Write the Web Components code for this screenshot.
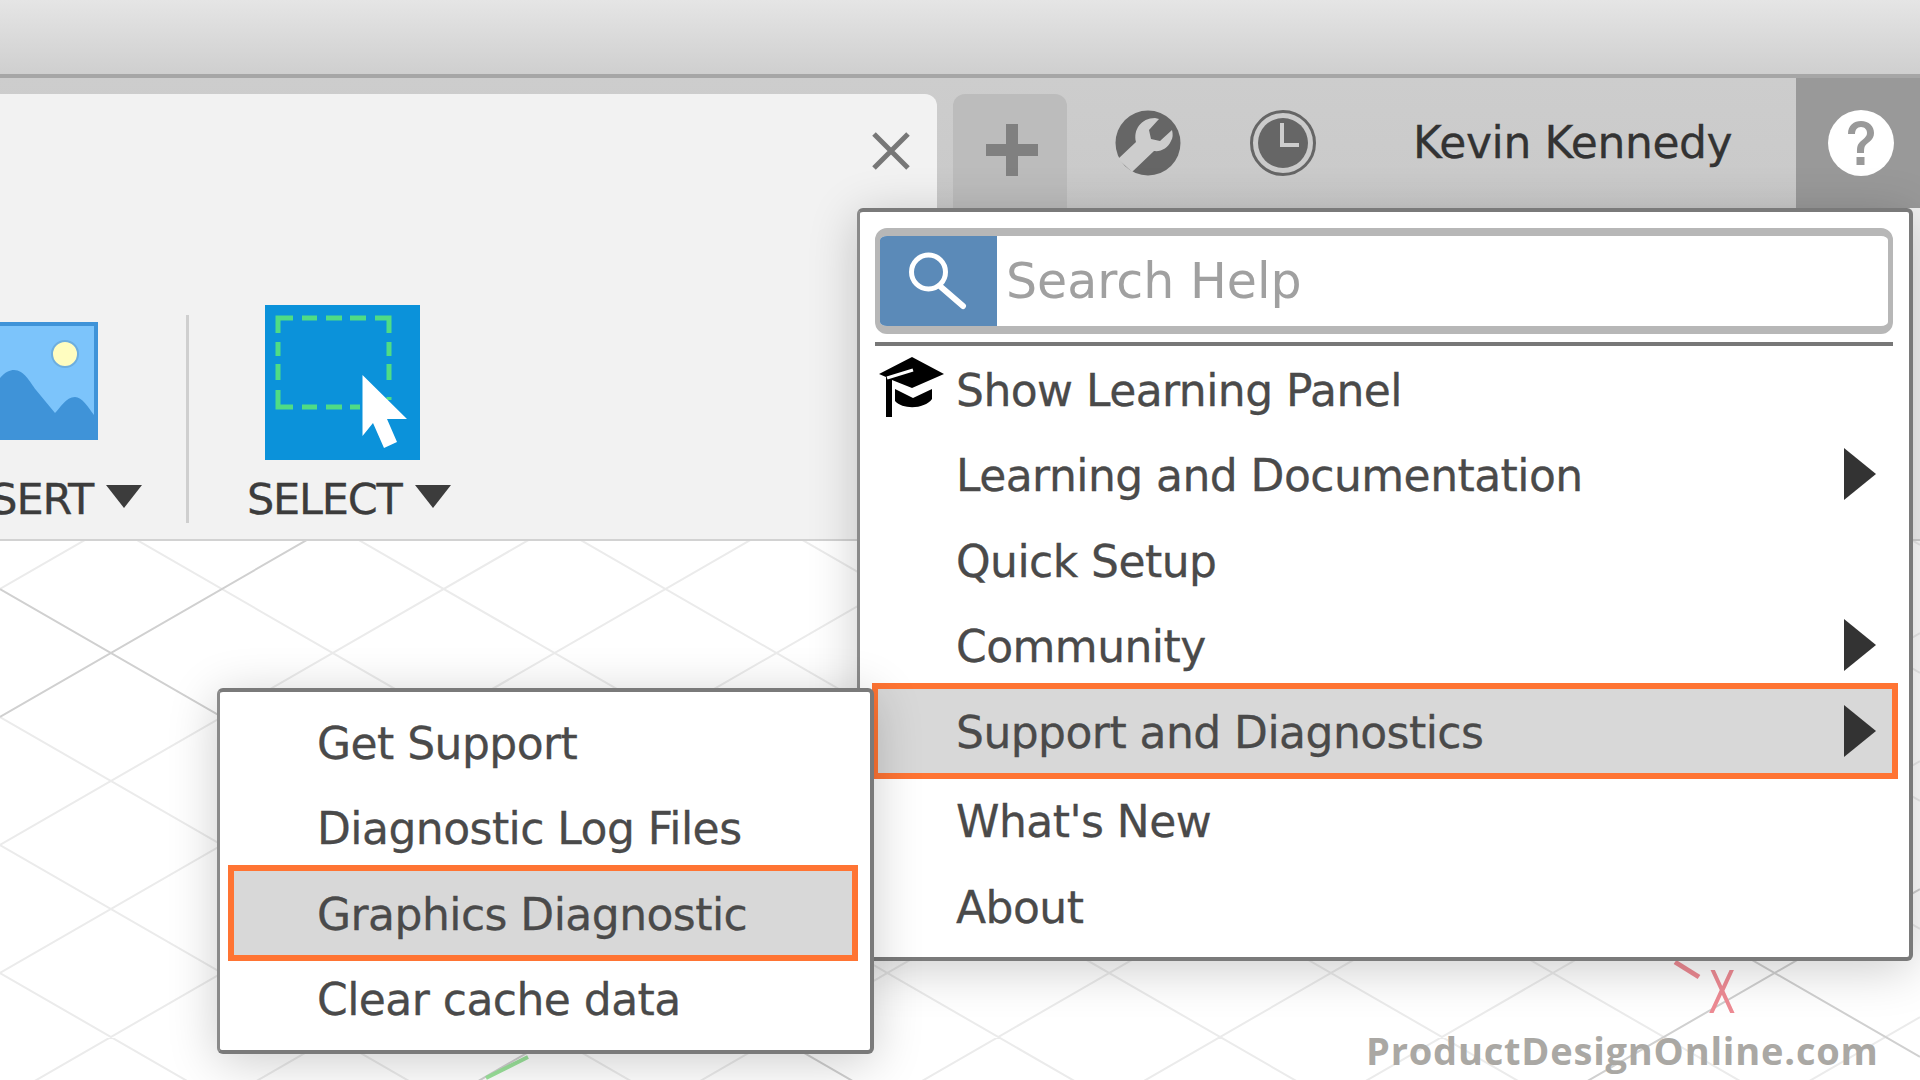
<!DOCTYPE html>
<html>
<head>
<meta charset="utf-8">
<title>Fusion help menu</title>
<style>
  html, body { margin: 0; height: 100%; overflow: hidden; }
  body { width: 1920px; height: 1080px; font-family: "DejaVu Sans", sans-serif; position: relative; background: #fff; }
</style>
</head>
<body>
<app-shell>
  <title-strip></title-strip>
  <tab-strip name="Kevin Kennedy"></tab-strip>
  <tool-bar></tool-bar>
  <grid-canvas></grid-canvas>
</app-shell>

<pop-menu style="left:857px;top:208px;width:1056px;height:753px;--frame-left:12px;">
  <search-box placeholder="Search Help"></search-box>
  <div style="height:4px;background:#777;margin:8px 16px 0 15px;"></div>
  <menu-row hat>Show Learning Panel</menu-row>
  <menu-row arrow>Learning and Documentation</menu-row>
  <menu-row>Quick Setup</menu-row>
  <menu-row arrow>Community</menu-row>
  <menu-row arrow marked>Support and Diagnostics</menu-row>
  <div style="height:4px"></div>
  <menu-row>What's New</menu-row>
  <menu-row>About</menu-row>
</pop-menu>

<pop-menu style="left:217px;top:688px;width:657px;height:366px;padding-top:7px;--frame-left:8px;--frame-right:12px;">
  <menu-row indent="97">Get Support</menu-row>
  <menu-row indent="97">Diagnostic Log Files</menu-row>
  <menu-row indent="97" marked>Graphics Diagnostic</menu-row>
  <menu-row indent="97">Clear cache data</menu-row>
</pop-menu>

<water-mark>ProductDesignOnline.com</water-mark>

<script>
class AppShell extends HTMLElement {
  constructor() {
    super();
    this.attachShadow({ mode: 'open' });
    this.shadowRoot.innerHTML = `
      <style>
        :host { display: flex; flex-direction: column; width: 1920px; height: 1080px; }
      </style>
      <slot></slot>
    `;
  }
}

class TitleStrip extends HTMLElement {
  constructor() {
    super();
    this.attachShadow({ mode: 'open' });
    this.shadowRoot.innerHTML = `
      <style>
        :host {
          display: block;
          height: 74px;
          flex: none;
          background: linear-gradient(#e5e5e5, #cfcfcf);
          border-bottom: 4px solid #a6a6a6;
        }
      </style>
    `;
  }
}

class TabStrip extends HTMLElement {
  constructor() {
    super();
    this.attachShadow({ mode: 'open' });
    this.shadowRoot.innerHTML = `
      <style>
        :host {
          display: flex;
          height: 130px;
          flex: none;
          background: linear-gradient(#cdcdcd, #c9c9c9);
          font-family: "DejaVu Sans", sans-serif;
        }
        :host > * { flex: none; }
        .tab {
          width: 937px;
          margin-top: 16px;
          background: #f2f2f2;
          border-top-right-radius: 12px;
          display: flex;
          justify-content: flex-end;
          padding: 37px 26px 0 0;
          box-sizing: border-box;
        }
        .add {
          width: 114px;
          margin: 16px 0 0 16px;
          background: #bcbcbc;
          border-radius: 12px 12px 0 0;
          display: flex;
          justify-content: center;
          padding: 30px 0 0 4px;
          box-sizing: border-box;
        }
        .wrench { margin: 32px 0 0 48px; }
        .clock { margin: 32px 0 0 69px; }
        .name {
          margin: 0 0 0 97px;
          width: 383px;
          padding-top: 40px;
          font-size: 44px;
          line-height: 50px;
          letter-spacing: -0.4px;
          color: #333;
          white-space: nowrap;
          -webkit-text-stroke: 0.3px #333;
          box-sizing: border-box;
        }
        .help {
          width: 124px;
          background: #999;
          display: flex;
          justify-content: center;
          padding: 32px 0 0 5px;
          box-sizing: border-box;
        }
        svg { display: block; }
      </style>
      <div class="tab">
        <svg width="40" height="40" viewBox="0 0 40 40"><path d="M3 3L37 37M37 3L3 37" stroke="#777" stroke-width="5" fill="none"/></svg>
      </div>
      <div class="add">
        <svg width="52" height="52" viewBox="0 0 52 52"><path d="M20 0h12v20h20v12H32v20H20V32H0V20h20z" fill="#808080"/></svg>
      </div>
      <div class="wrench">
        <svg width="66" height="66" viewBox="0 0 66 66">
          <circle cx="33" cy="33" r="32.5" fill="#666"/>
          <path d="M3 49L21 32C18 20 26 8 40 8L44 9 34 20 36 29 45 31 57 20C58 24 58 28 56 31 53 38 46 42 39 41L17 62z" fill="#cdcdcd"/>
        </svg>
      </div>
      <div class="clock">
        <svg width="66" height="66" viewBox="0 0 66 66">
          <circle cx="33" cy="33" r="31.5" fill="none" stroke="#666" stroke-width="3"/>
          <circle cx="33" cy="33" r="25" fill="#666"/>
          <path d="M32 13V35H49" fill="none" stroke="#cdcdcd" stroke-width="4"/>
        </svg>
      </div>
      <div class="name">${this.getAttribute('name')}</div>
      <div class="help">
        <svg width="66" height="66" viewBox="0 0 66 66">
          <circle cx="33" cy="33" r="33" fill="#fff"/>
          <path d="M20 24C20 15 26 11 33 11 41 11 46 16 46 23 46 30 40 32 37 36 36 38 36 40 36 43H29C29 38 29 35 32 32 35 29 39 27 39 23 39 20 37 17 33 17 29 17 27 20 27 24z" fill="#999"/>
          <rect x="28.5" y="47" width="8" height="8" fill="#999"/>
        </svg>
      </div>
    `;
  }
}

class ToolBar extends HTMLElement {
  constructor() {
    super();
    this.attachShadow({ mode: 'open' });
    this.shadowRoot.innerHTML = `
      <style>
        :host {
          display: flex;
          align-items: flex-start;
          height: 331px;
          flex: none;
          background: #f2f2f2;
          border-bottom: 2px solid #d2d2d2;
          overflow: hidden;
          font-family: "DejaVu Sans", sans-serif;
        }
        :host > * { flex: none; }
        .insert { width: 186px; margin-top: 114px; }
        .rule { width: 3px; height: 208px; background: #cfcfcf; margin-top: 107px; }
        .select { margin: 97px 0 0 76px; }
        .label {
          display: flex;
          align-items: center;
          font-size: 43px;
          line-height: 50px;
          letter-spacing: -1.2px;
          color: #3c3c3c;
          white-space: nowrap;
          -webkit-text-stroke: 0.3px #3c3c3c;
        }
        .tri {
          width: 0; height: 0;
          border-left: 18px solid transparent;
          border-right: 18px solid transparent;
          border-top: 23px solid #3c3c3c;
          margin: -5px 0 0 13px;
          flex: none;
        }
        svg { display: block; }
        .insert .label { margin: 34px 44px 0 0; justify-content: flex-end; }
        .select .label { margin: 14px 0 0 -18px; }
      </style>
      <div class="insert">
        <svg width="98" height="118" viewBox="0 0 98 118">
          <rect width="98" height="118" fill="#3f93d8"/>
          <rect x="0" y="4" width="94" height="110" fill="#7cc4fb"/>
          <circle cx="65" cy="32" r="13" fill="#fffdc0" stroke="#6daedf" stroke-width="2"/>
          <path d="M0 56C5 50 10 48 14 48 24 48 30 60 36 68L55 91C60 86 66 75 75 75 82 75 88 85 94 93V118H0z" fill="#3f93d8"/>
        </svg>
        <div class="label">SERT<span class="tri"></span></div>
      </div>
      <div class="rule"></div>
      <div class="select">
        <svg width="155" height="155" viewBox="0 0 155 155">
          <rect width="155" height="155" fill="#0b92da"/>
          <path d="M13 28V13H28M37 13H52M61 13H77M85 13H101M110 13H124V28M124 37V51M124 59V75M124 92V95M13 37V51M13 59V75M13 85V102H28M37 102H52M61 102H77M85 102H95" fill="none" stroke="#4fdc85" stroke-width="5"/>
          <path d="M97.500 70V131L108 118 119 143 132 137 122 114H142z" fill="#fff"/>
        </svg>
        <div class="label">SELECT<span class="tri"></span></div>
      </div>
    `;
  }
}

class GridCanvas extends HTMLElement {
  constructor() {
    super();
    this.attachShadow({ mode: 'open' });
    // isometric floor grid, every 5th line is the darker one
    const slope = 0.577;
    let minor = '';
    let major = '';
    for (let k = -20; k <= 20; k++) {
      const up = `M0 ${589 + 128 * k}L1920 ${589 + 128 * k + slope * 1920}`;
      const down = `M0 ${717 + 128 * k}L1920 ${717 + 128 * k - slope * 1920}`;
      if (k % 5 === 0) major += up; else minor += up;
      if (k % 5 === 0) major += down; else minor += down;
    }
    this.shadowRoot.innerHTML = `
      <style>
        :host { display: block; flex: 1; background: #fff; overflow: hidden; position: relative; }
        svg { position: absolute; left: 0; top: 0; }
      </style>
      <svg width="1920" height="539" viewBox="0 541 1920 539">
        <path d="${minor}" stroke="#ebebeb" stroke-width="2" fill="none"/>
        <path d="${major}" stroke="#d0d0d0" stroke-width="2" fill="none"/>
        <path d="M486 1078L528 1057" stroke="#9be39b" stroke-width="4"/>
        <path d="M1675 962L1699 977" stroke="#ee8b94" stroke-width="5"/>
        <text transform="translate(1708 1013) scale(.7 1)" font-family="DejaVu Sans, sans-serif" font-size="58" fill="#ee8b94">X</text>
      </svg>
    `;
  }
}

class PopMenu extends HTMLElement {
  constructor() {
    super();
    this.attachShadow({ mode: 'open' });
    this.shadowRoot.innerHTML = `
      <style>
        :host {
          display: block;
          position: absolute;
          background: #fff;
          border-radius: 6px;
          border-top: 4px solid #7a7a7a;
          border-left: 3px solid #8a8a8a;
          border-right: 4px solid #7a7a7a;
          border-bottom: 4px solid #7a7a7a;
          box-sizing: border-box;
          box-shadow: 0 8px 50px rgba(0,0,0,.2);
        }
      </style>
      <slot></slot>
    `;
  }
}

class SearchBox extends HTMLElement {
  constructor() {
    super();
    this.attachShadow({ mode: 'open' });
    this.shadowRoot.innerHTML = `
      <style>
        :host {
          display: flex;
          height: 106px;
          margin: 16px 16px 0 15px;
          border-style: solid;
          border-color: #b7b7b7;
          border-width: 8px 5px;
          border-radius: 12px;
          box-sizing: border-box;
          overflow: hidden;
          font-family: "DejaVu Sans", sans-serif;
        }
        .icon { width: 117px; flex: none; background: #5b8ab8; display: flex; align-items: center; justify-content: center; }
        .text { padding-left: 9px; font-size: 49px; color: #a0a0a0; display: flex; align-items: center; }
        svg { display: block; }
      </style>
      <div class="icon">
        <svg width="62" height="62" viewBox="0 0 62 62"><circle cx="20.500" cy="22" r="17" fill="none" stroke="#fff" stroke-width="5"/><path d="M33 37L55 56" stroke="#fff" stroke-width="6" stroke-linecap="round"/></svg>
      </div>
      <div class="text">${this.getAttribute('placeholder')}</div>
    `;
  }
}

class MenuRow extends HTMLElement {
  constructor() {
    super();
    this.attachShadow({ mode: 'open' });
    const indent = this.getAttribute('indent') || 96;
    this.shadowRoot.innerHTML = `
      <style>
        :host {
          display: flex;
          align-items: center;
          height: 85.5px;
          position: relative;
          box-sizing: border-box;
          padding: 3px 0 0 ${indent}px;
          font-family: "DejaVu Sans", sans-serif;
          font-size: 44px;
          letter-spacing: -0.55px;
          color: #4a4a4a;
          -webkit-text-stroke: 0.3px #4a4a4a;
          white-space: nowrap;
        }
        .frame {
          position: absolute;
          top: -5px;
          bottom: -5px;
          left: var(--frame-left);
          right: var(--frame-right, 11px);
          border: 6px solid #ff7433;
          background: #d8d8d8;
        }
        .txt { position: relative; }
        .arrow {
          position: absolute;
          right: 33px;
          top: 50%;
          margin-top: -26px;
          width: 0; height: 0;
          border-top: 26px solid transparent;
          border-bottom: 26px solid transparent;
          border-left: 32px solid #333;
        }
        .hat { position: absolute; left: 19px; top: 50%; margin-top: -32px; }
      </style>
      ${this.hasAttribute('marked') ? '<span class="frame"></span>' : ''}
      ${this.hasAttribute('hat') ? `<svg class="hat" width="66" height="60" viewBox="0 0 66 60">
        <path d="M33 0L65 17 33 31 13 23V60H7V20L0 17z" fill="#000"/>
        <path d="M8 21L34 13" stroke="#fff" stroke-width="3"/>
        <path d="M16 32L34 41 53 32V42C46 52 24 53 16 44z" fill="#000"/>
      </svg>` : ''}
      <span class="txt"><slot></slot></span>
      ${this.hasAttribute('arrow') ? '<span class="arrow"></span>' : ''}
    `;
  }
}

class WaterMark extends HTMLElement {
  constructor() {
    super();
    this.attachShadow({ mode: 'open' });
    this.shadowRoot.innerHTML = `
      <style>
        :host {
          display: block;
          position: absolute;
          left: 1366px;
          top: 1025px;
          font-family: "Open Sans", sans-serif;
          font-weight: 700;
          font-size: 38px;
          letter-spacing: 0.8px;
          line-height: 50px;
          color: #aaa8a4;
          white-space: nowrap;
        }
      </style>
      <slot></slot>
    `;
  }
}

customElements.define('app-shell', AppShell);
customElements.define('title-strip', TitleStrip);
customElements.define('tab-strip', TabStrip);
customElements.define('tool-bar', ToolBar);
customElements.define('grid-canvas', GridCanvas);
customElements.define('pop-menu', PopMenu);
customElements.define('search-box', SearchBox);
customElements.define('menu-row', MenuRow);
customElements.define('water-mark', WaterMark);
</script>
</body>
</html>
